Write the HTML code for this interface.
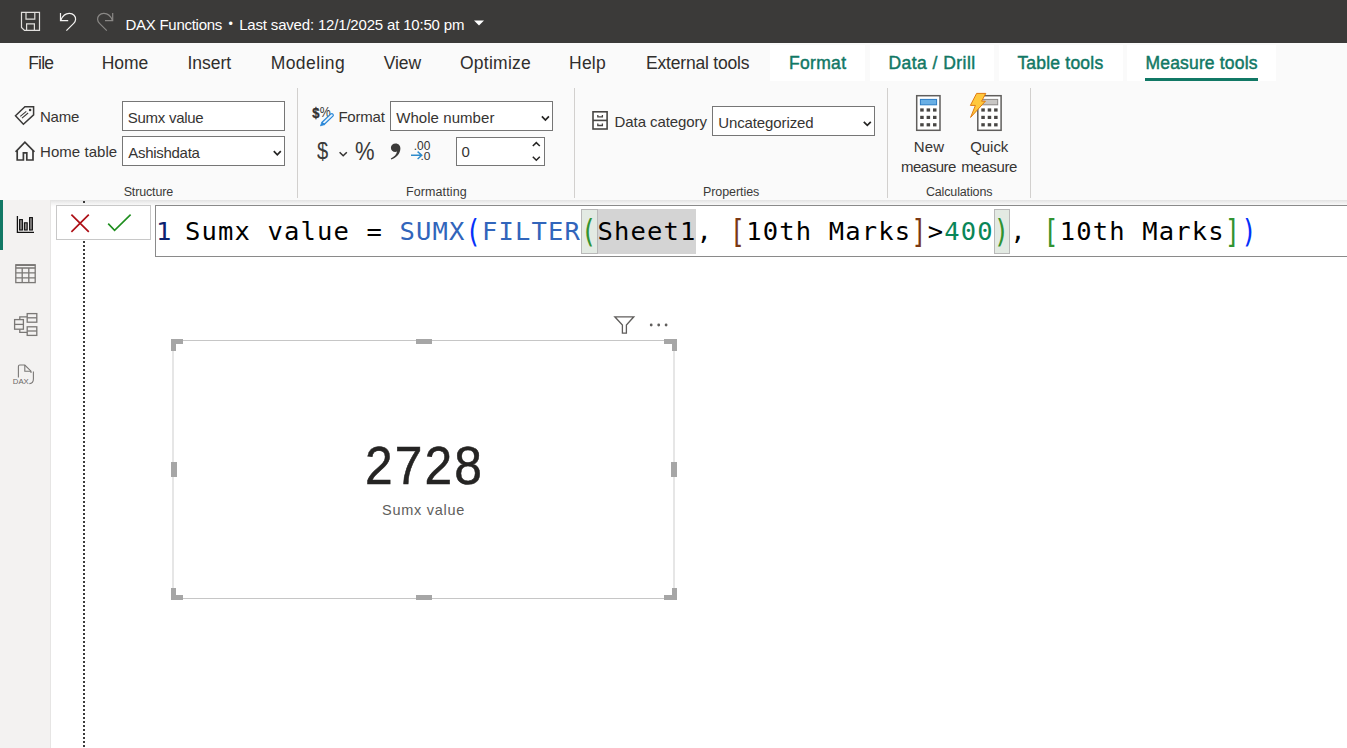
<!DOCTYPE html>
<html lang="en">
<head>
<meta charset="utf-8">
<title>DAX Functions - Power BI Desktop</title>
<style>
*{box-sizing:border-box;margin:0;padding:0}
html,body{width:1347px;height:748px;overflow:hidden;background:#fff;font-family:"Liberation Sans",Arial,sans-serif}
.abs,.t,svg.i{position:absolute}
.t{white-space:pre;line-height:1}
.sb{-webkit-text-stroke:0.45px #117865}
.big{-webkit-text-stroke:0.55px #252423}
#titlebar{position:absolute;left:0;top:0;width:1347px;height:42.5px;background:#3b3a39}
#ribbon{position:absolute;left:0;top:42.5px;width:1347px;height:157px;background:#fafafa}
#ribbonshadow{position:absolute;left:0;top:199.5px;width:1347px;height:7px;background:linear-gradient(#e2e2e2,#f2f2f2 45%,#ffffff)}
.ctab{position:absolute;top:44.5px;height:36.5px;background:#fff}
.sep{position:absolute;top:88px;width:1px;height:110px;background:#d2d0ce}
.box{position:absolute;background:#fff;border:1px solid #767676}
#sidebar{position:absolute;left:0;top:200px;width:51px;height:548px;background:#f3f2f1;border-right:1px solid #e6e5e4}
#sel{position:absolute;left:0;top:200px;width:3px;height:50px;background:#117865}
#dots{position:absolute;left:83px;top:201px;width:2px;height:547px;background:repeating-linear-gradient(to bottom,#3a3a3a 0,#3a3a3a 2px,transparent 2px,transparent 4px)}
#okbox{position:absolute;left:56px;top:205px;width:95px;height:35px;background:#fff;border:1px solid #c8c8c8}
#fbox{position:absolute;left:155px;top:205px;width:1200px;height:52px;background:#fff;border:1px solid #8a8a8a}
#fln,#ftext{position:absolute;top:208.5px;height:44px;line-height:44px;white-space:pre;font-family:"DejaVu Sans Mono","Liberation Mono",monospace;font-size:25.5px;letter-spacing:1.15px;color:#000}
#fln{left:156px;color:#0b216f}
#ftext{left:185px}
.hl1{position:absolute;top:209px;height:45px;background:#e3eae3;border:1px solid #b9b9b9}
.hl2{position:absolute;top:209px;height:45px;background:#d4d4d4}
.b1,.b2,.b3{display:inline-block;transform:translateY(.5px) scaleY(1.22);transform-origin:50% 24px}
.k{color:#3165bb}.b1{color:#0431fa}.b2{color:#319331}.b3{color:#7b3814}.n{color:#098658}
#card{position:absolute;left:172px;top:340px;width:503px;height:259px;border-top:1px solid #c6c6c6;border-bottom:1px solid #c6c6c6;border-left:2px solid #e6e6e6;border-right:2px solid #e6e6e6}
.h{position:absolute;background:#a6a6a6}
</style>
</head>
<body>
<!-- ===== Title bar ===== -->
<header id="titlebar">
<svg class="i" style="left:18px;top:9px" width="26" height="26" viewBox="18 9 26 26" fill="none" stroke="#e1dfdd" stroke-width="1.2"><path d="M21.5 12.4H39.5V30.4H24.5L21.5 27.4Z"/><path d="M26 12.4V19.2H34.8V12.4"/><path d="M26.6 30.4V23.8H34.4V30.4"/></svg>
<svg class="i" style="left:56px;top:9px" width="26" height="26" viewBox="56 9 26 26" fill="none" stroke="#f3f2f1" stroke-width="1.2"><path d="M60.5 13V20.6H68.2"/><path d="M60.8 20.3C62.5 16 66 13.3 69.5 13.4C73.3 13.5 75.8 16.3 75.6 19.4C75.5 21 74.8 22.3 73.7 23.4L66.4 30.7"/></svg>
<svg class="i" style="left:93px;top:9px" width="26" height="26" viewBox="93 9 26 26" fill="none" stroke="#8a8886" stroke-width="1.2"><path d="M112.7 13V20.6H105"/><path d="M112.4 20.3C110.7 16 107.2 13.3 103.7 13.4C99.9 13.5 97.4 16.3 97.6 19.4C97.7 21 98.4 22.3 99.5 23.4L106.8 30.7"/></svg>
<svg class="i" style="left:473px;top:19px" width="12" height="8" viewBox="473 19 12 8"><path d="M474 20.6H484L479 25.4Z" fill="#ffffff"/></svg>
<span class="t" style="left:125.5px;top:16.8px;font-size:15px;letter-spacing:-0.27px;color:#ffffff;">DAX Functions</span>
<span class="t" style="left:228.5px;top:18.0px;font-size:12.5px;letter-spacing:0.00px;color:#ffffff;">•</span>
<span class="t" style="left:239.2px;top:16.8px;font-size:15px;letter-spacing:-0.18px;color:#ffffff;">Last saved: 12/1/2025 at 10:50 pm</span>
</header>
<!-- ===== Ribbon ===== -->
<section id="ribbon"></section>
<nav id="tabs">
<div class="ctab" style="left:770px;width:95px"></div>
<div class="ctab" style="left:870px;width:124px"></div>
<div class="ctab" style="left:999px;width:124px"></div>
<div class="ctab" style="left:1127px;width:149px"></div>
<div class="abs" style="left:1145px;top:78px;width:113px;height:3px;background:#117865"></div>
<span class="t" style="left:28.2px;top:54.9px;font-size:17.5px;letter-spacing:-0.82px;color:#302e2c;">File</span>
<span class="t" style="left:101.7px;top:54.9px;font-size:17.5px;letter-spacing:-0.05px;color:#302e2c;">Home</span>
<span class="t" style="left:187.5px;top:54.9px;font-size:17.5px;letter-spacing:-0.03px;color:#302e2c;">Insert</span>
<span class="t" style="left:270.7px;top:54.9px;font-size:17.5px;letter-spacing:0.43px;color:#302e2c;">Modeling</span>
<span class="t" style="left:383.8px;top:54.9px;font-size:17.5px;letter-spacing:-0.09px;color:#302e2c;">View</span>
<span class="t" style="left:459.9px;top:54.9px;font-size:17.5px;letter-spacing:0.27px;color:#302e2c;">Optimize</span>
<span class="t" style="left:569.1px;top:54.9px;font-size:17.5px;letter-spacing:0.18px;color:#302e2c;">Help</span>
<span class="t" style="left:646.0px;top:54.9px;font-size:17.5px;letter-spacing:-0.19px;color:#302e2c;">External tools</span>
<span class="t sb" style="left:788.9px;top:54.9px;font-size:17.5px;letter-spacing:0.34px;color:#117865;">Format</span>
<span class="t sb" style="left:888.4px;top:54.9px;font-size:17.5px;letter-spacing:0.46px;color:#117865;">Data / Drill</span>
<span class="t sb" style="left:1017.4px;top:54.9px;font-size:17.5px;letter-spacing:0.21px;color:#117865;">Table tools</span>
<span class="t sb" style="left:1145.5px;top:54.9px;font-size:17.5px;letter-spacing:0.17px;color:#117865;">Measure tools</span>
</nav>
<section id="ribbonbody">
<div class="sep" style="left:297px"></div>
<div class="sep" style="left:574px"></div>
<div class="sep" style="left:887px"></div>
<div class="sep" style="left:1030px"></div>
<div class="box" style="left:122px;top:101px;width:163px;height:30px"></div>
<div class="box" style="left:122px;top:136px;width:163px;height:30px"></div>
<div class="box" style="left:390px;top:101px;width:163px;height:30px"></div>
<div class="box" style="left:456px;top:137px;width:89px;height:29px"></div>
<div class="box" style="left:712px;top:106px;width:163px;height:30px"></div>
<svg class="i" style="left:13px;top:104px" width="24" height="23" viewBox="13 104 24 23" fill="none" stroke="#3b3a39" stroke-width="1.5" stroke-linejoin="miter"><path d="M15.5 115.8L24.9 106.7H33.6V114.9L23.4 124.3Z"/><path d="M20.3 116.3L26.3 111.3M22 118.1L28.1 113" stroke-width="1.1"/><circle cx="30.1" cy="110" r="1.3" fill="#3b3a39" stroke="none"/></svg>
<svg class="i" style="left:13px;top:139px" width="24" height="24" viewBox="13 139 24 24" fill="none" stroke="#3b3a39" stroke-width="1.7"><path d="M15.6 151.8L24.9 142.2L34.4 151.8"/><path d="M17.2 150.6V160H23.4V152.8H26.8V160H33V150.6"/></svg>
<svg class="i" style="left:311px;top:103px" width="24" height="25" viewBox="311 103 24 25"><text x="312.2" y="117.6" font-family="Liberation Sans, Arial, sans-serif" font-size="14.5" font-weight="700" fill="#323130" stroke="#323130" stroke-width="0.4" textLength="7.2" lengthAdjust="spacingAndGlyphs">$</text><text x="319.8" y="117.4" font-family="Liberation Sans, Arial, sans-serif" font-size="15" fill="#3b3a39" textLength="11" lengthAdjust="spacingAndGlyphs">%</text><path d="M322.07 122.32L330.87 113.92A1.5 1.5 0 0 1 332.93 116.08L324.13 124.48Z" fill="#e6f2fc" stroke="#2b88d8" stroke-width="1.25" stroke-linejoin="round"/><path d="M321.9 122.1L320.4 125.9L324.3 124.7Z" fill="#2b88d8" stroke="#2b88d8" stroke-width="0.7" stroke-linejoin="round"/></svg>
<svg class="i" style="left:337px;top:149px" width="12" height="10" viewBox="337 149 12 10" fill="none" stroke="#323130" stroke-width="1.5"><path d="M339.6 152.2L343.2 155.8L346.8 152.2"/></svg>
<svg class="i" style="left:388px;top:141px" width="15" height="21" viewBox="388 141 15 21"><path d="M395.6 143.4C398.6 143.4 400.4 145.6 400.4 148.6C400.4 153.6 396.6 157.6 391.2 159.6L390.8 158.6C394.4 156.8 396.6 154.4 397 151.6C396.6 151.8 396 151.9 395.4 151.9C392.8 151.9 390.9 150.1 390.9 147.7C390.9 145.3 392.9 143.4 395.6 143.4Z" fill="#3b3a39"/></svg>
<svg class="i" style="left:409px;top:139px" width="24" height="23" viewBox="409 139 24 23"><text x="413.8" y="149.7" font-family="Liberation Sans, Arial, sans-serif" font-size="12.6" fill="#323130" textLength="16.6" lengthAdjust="spacingAndGlyphs">.00</text><text x="420.4" y="159.6" font-family="Liberation Sans, Arial, sans-serif" font-size="11.5" fill="#323130" textLength="10" lengthAdjust="spacingAndGlyphs">.0</text><path d="M411 155.3H421.6M417.6 151.6L421.8 155.3L417.6 159" fill="none" stroke="#2e8bcb" stroke-width="1.4"/></svg>
<svg class="i" style="left:590px;top:109px" width="20" height="23" viewBox="590 109 20 23" fill="none" stroke="#484644" stroke-width="1.6"><rect x="593" y="111.8" width="14.1" height="17.2" fill="#ffffff"/><path d="M593 120.4H607.1"/><path d="M597.8 115V116.9H602.4V115M597.8 123.6V125.5H602.4V123.6" stroke-width="1.3"/></svg>
<svg class="i" style="left:271px;top:148px" width="12" height="10" viewBox="271 148 12 10" fill="none" stroke="#252423" stroke-width="1.7"><path d="M273.8 151.2L277.3 154.8L280.8 151.2"/></svg>
<svg class="i" style="left:539px;top:113px" width="12" height="10" viewBox="539 113 12 10" fill="none" stroke="#252423" stroke-width="1.7"><path d="M541.9 116.4L545.4 120L548.9 116.4"/></svg>
<svg class="i" style="left:861px;top:118px" width="12" height="10" viewBox="861 118 12 10" fill="none" stroke="#252423" stroke-width="1.7"><path d="M863.8 121.8L867.3 125.4L870.8 121.8"/></svg>
<svg class="i" style="left:530px;top:139px" width="12" height="25" viewBox="530 139 12 25" fill="none" stroke="#252423" stroke-width="1.5"><path d="M532.8 146L536.3 142.6L539.8 146"/><path d="M532.8 156.8L536.3 160.2L539.8 156.8"/></svg>
<svg class="i" style="left:914px;top:93px" width="29" height="40" viewBox="914 93 29 40"><rect x="916.7" y="95.7" width="23.3" height="34.6" fill="#ffffff" stroke="#605e5c" stroke-width="1.5"/><rect x="920.4" y="99.4" width="16.2" height="5.4" fill="#69afe5" stroke="#2b7cc4" stroke-width="1"/><g fill="#484644"><rect x="920.2" y="108.4" width="3.5" height="3.2"/><rect x="926.6" y="108.4" width="3.5" height="3.2"/><rect x="933" y="108.4" width="3.5" height="3.2"/><rect x="920.2" y="115.8" width="3.5" height="3.2"/><rect x="926.6" y="115.8" width="3.5" height="3.2"/><rect x="933" y="115.8" width="3.5" height="3.2"/><rect x="920.2" y="123.2" width="3.5" height="3.2"/><rect x="926.6" y="123.2" width="3.5" height="3.2"/><rect x="933" y="123.2" width="3.5" height="3.2"/></g></svg>
<svg class="i" style="left:967px;top:91px" width="37" height="42" viewBox="967 91 37 42"><rect x="977.8" y="95.7" width="23.3" height="34.6" fill="#ffffff" stroke="#605e5c" stroke-width="1.5"/><rect x="981.5" y="99.4" width="16.2" height="5.4" fill="#c8c6c4" stroke="#8a8886" stroke-width="1"/><g fill="#484644"><rect x="981.3" y="108.4" width="3.5" height="3.2"/><rect x="987.7" y="108.4" width="3.5" height="3.2"/><rect x="994.1" y="108.4" width="3.5" height="3.2"/><rect x="981.3" y="115.8" width="3.5" height="3.2"/><rect x="987.7" y="115.8" width="3.5" height="3.2"/><rect x="994.1" y="115.8" width="3.5" height="3.2"/><rect x="981.3" y="123.2" width="3.5" height="3.2"/><rect x="987.7" y="123.2" width="3.5" height="3.2"/><rect x="994.1" y="123.2" width="3.5" height="3.2"/></g><path d="M976.6 93.4H985.8L981.6 101.2H985.4L970.6 117.4L975.4 105.4H970.4Z" fill="#ffc83d" stroke="#e07a10" stroke-width="1" stroke-linejoin="round"/></svg>
<span class="t" style="left:40.0px;top:108.8px;font-size:15px;letter-spacing:-0.21px;color:#363432;">Name</span>
<span class="t" style="left:127.7px;top:109.7px;font-size:15px;letter-spacing:-0.26px;color:#363432;">Sumx value</span>
<span class="t" style="left:40.0px;top:143.7px;font-size:15px;letter-spacing:0.05px;color:#363432;">Home table</span>
<span class="t" style="left:128.2px;top:145.0px;font-size:15px;letter-spacing:-0.28px;color:#363432;">Ashishdata</span>
<span class="t" style="left:338.4px;top:108.8px;font-size:15px;letter-spacing:-0.20px;color:#363432;">Format</span>
<span class="t" style="left:396.2px;top:109.7px;font-size:15px;letter-spacing:0.06px;color:#363432;">Whole number</span>
<span class="t" style="left:461.5px;top:144.2px;font-size:15px;letter-spacing:0.00px;color:#363432;">0</span>
<span class="t" style="left:614.5px;top:113.8px;font-size:15px;letter-spacing:-0.07px;color:#363432;">Data category</span>
<span class="t" style="left:718.2px;top:115.0px;font-size:15px;letter-spacing:-0.11px;color:#363432;">Uncategorized</span>
<span class="t" style="left:913.8px;top:138.6px;font-size:15px;letter-spacing:0.09px;color:#363432;">New</span>
<span class="t" style="left:900.9px;top:158.6px;font-size:15px;letter-spacing:-0.48px;color:#363432;">measure</span>
<span class="t" style="left:970.2px;top:138.6px;font-size:15px;letter-spacing:-0.04px;color:#363432;">Quick</span>
<span class="t" style="left:961.2px;top:158.6px;font-size:15px;letter-spacing:-0.36px;color:#363432;">measure</span>
<span class="t" style="left:123.7px;top:185.5px;font-size:12.5px;letter-spacing:-0.16px;color:#3b3a39;">Structure</span>
<span class="t" style="left:406.0px;top:185.5px;font-size:12.5px;letter-spacing:0.10px;color:#3b3a39;">Formatting</span>
<span class="t" style="left:702.9px;top:185.5px;font-size:12.5px;letter-spacing:-0.06px;color:#3b3a39;">Properties</span>
<span class="t" style="left:925.9px;top:185.5px;font-size:12.5px;letter-spacing:-0.14px;color:#3b3a39;">Calculations</span>
<span class="t" style="left:316.6px;top:138.9px;font-size:24.5px;letter-spacing:0.00px;color:#3b3a39;transform:scaleX(0.82);transform-origin:0 0;">$</span>
<span class="t" style="left:355.2px;top:138.6px;font-size:25px;letter-spacing:0.00px;color:#3b3a39;transform:scaleX(0.88);transform-origin:0 0;">%</span>
</section>
<div id="ribbonshadow"></div>
<!-- ===== Left view switcher ===== -->
<aside id="sidebar"></aside>
<div id="sel"></div>
<svg class="i" style="left:14px;top:213px" width="23" height="23" viewBox="14 213 23 23" fill="none" stroke="#111" stroke-width="1.1"><path d="M17.4 216V232.4H34" stroke-width="1.3"/><rect x="19.6" y="219.6" width="2.8" height="10.4" fill="#8a8886"/><rect x="24.4" y="222.8" width="2.8" height="7.2" fill="#8a8886"/><rect x="29.6" y="217.6" width="2.8" height="12.4" fill="#8a8886"/></svg>
<svg class="i" style="left:13px;top:262px" width="25" height="24" viewBox="13 262 25 24" fill="none" stroke="#7a7876" stroke-width="1.3"><rect x="15.8" y="264.8" width="19.4" height="17.8" /><path d="M15.8 265.2H35.2" stroke-width="1.6"/><path d="M15.8 268H35.2M15.8 272.8H35.2M15.8 277.8H35.2M22.2 267.4V282.6M28.8 267.4V282.6"/></svg>
<svg class="i" style="left:12px;top:311px" width="27" height="27" viewBox="12 311 27 27" fill="none" stroke="#7a7876" stroke-width="1.3"><rect x="14.6" y="319.6" width="8.8" height="9.6"/><path d="M14.6 324.4H23.4"/><rect x="27.2" y="313.6" width="9.6" height="8.6"/><path d="M27.2 317.8H36.8"/><rect x="27.2" y="326.8" width="9.6" height="8.6"/><path d="M27.2 331H36.8"/><path d="M19.8 319.6V316.8H27.2M19.8 329.2V332.4H27.2"/></svg>
<svg class="i" style="left:11px;top:362px" width="26" height="25" viewBox="11 362 26 25" fill="none" stroke="#7a7876" stroke-width="1.1"><path d="M18.4 377.6V366.4Q18.4 365 19.8 365H24.8L31 371.2V373"/><path d="M24.8 365V371.2H31"/><path d="M33.4 371.4V379Q33.4 383.4 29.4 383.6"/><text x="12.8" y="384.2" font-family="Liberation Sans, Arial, sans-serif" font-size="7.8" font-weight="400" fill="#6a6866" stroke="none" textLength="16" lengthAdjust="spacingAndGlyphs">DAX</text></svg>
<!-- ===== Canvas ===== -->
<div id="dots"></div>
<!-- ===== Formula bar ===== -->
<section id="formulabar">
<div id="okbox"></div>
<svg class="i" style="left:69px;top:212px" width="22" height="22" viewBox="69 212 22 22" fill="none" stroke="#ad0f16" stroke-width="1.7"><path d="M71.4 214.6L88.8 231.8M88.8 214.6L71.4 231.8"/></svg>
<svg class="i" style="left:105px;top:212px" width="28" height="22" viewBox="105 212 28 22" fill="none" stroke="#1e8e1e" stroke-width="1.6"><path d="M108.2 223.6L114.6 230.4L130.6 214.6"/></svg>
<div id="fbox"></div>
<div class="hl1" style="left:581px;width:17px"></div><div class="hl2" style="left:598px;width:98px"></div><div class="hl1" style="left:994px;width:16px"></div>
<div id="fln">1</div>
<div id="ftext">Sumx value = <span class="k">SUMX</span><span class="b1">(</span><span class="k">FILTER</span><span class="b2">(</span>Sheet1, <span class="b3">[</span>10th Marks<span class="b3">]</span>&gt;<span class="n">400</span><span class="b2">)</span>, <span class="b2">[</span>10th Marks<span class="b2">]</span><span class="b1">)</span></div>
</section>
<!-- ===== Card visual ===== -->
<section id="visual">
<div id="card"></div>
<div class="h" style="left:171px;top:339px;width:12px;height:5px"></div><div class="h" style="left:171px;top:339px;width:5px;height:12px"></div>
<div class="h" style="left:664px;top:339px;width:13px;height:5px"></div><div class="h" style="left:672px;top:339px;width:5px;height:12px"></div>
<div class="h" style="left:171px;top:595px;width:12px;height:5px"></div><div class="h" style="left:171px;top:588px;width:5px;height:12px"></div>
<div class="h" style="left:664px;top:595px;width:13px;height:5px"></div><div class="h" style="left:672px;top:588px;width:5px;height:12px"></div>
<div class="h" style="left:416px;top:339px;width:16px;height:5px"></div>
<div class="h" style="left:416px;top:595px;width:16px;height:5px"></div>
<div class="h" style="left:171px;top:462px;width:6px;height:15px"></div>
<div class="h" style="left:671px;top:462px;width:6px;height:15px"></div>
<svg class="i" style="left:612px;top:314px" width="24" height="22" viewBox="612 314 24 22" fill="none" stroke="#605e5c" stroke-width="1.3"><path d="M614.8 316.8H633.8L626.4 325V333.2H622.4V325Z"/></svg>
<svg class="i" style="left:648px;top:321px" width="22" height="8" viewBox="648 321 22 8" fill="#605e5c"><circle cx="651.2" cy="325" r="1.4"/><circle cx="658.7" cy="325" r="1.4"/><circle cx="666.1" cy="325" r="1.4"/></svg>
<span class="t big" style="left:365.2px;top:438.7px;font-size:54.3px;letter-spacing:2.31px;color:#252423;transform:scaleX(0.915);transform-origin:0 0;">2728</span>
<span class="t" style="left:382.1px;top:502.6px;font-size:14.5px;letter-spacing:0.72px;color:#605e5c;">Sumx value</span>
</section>
</body>
</html>
